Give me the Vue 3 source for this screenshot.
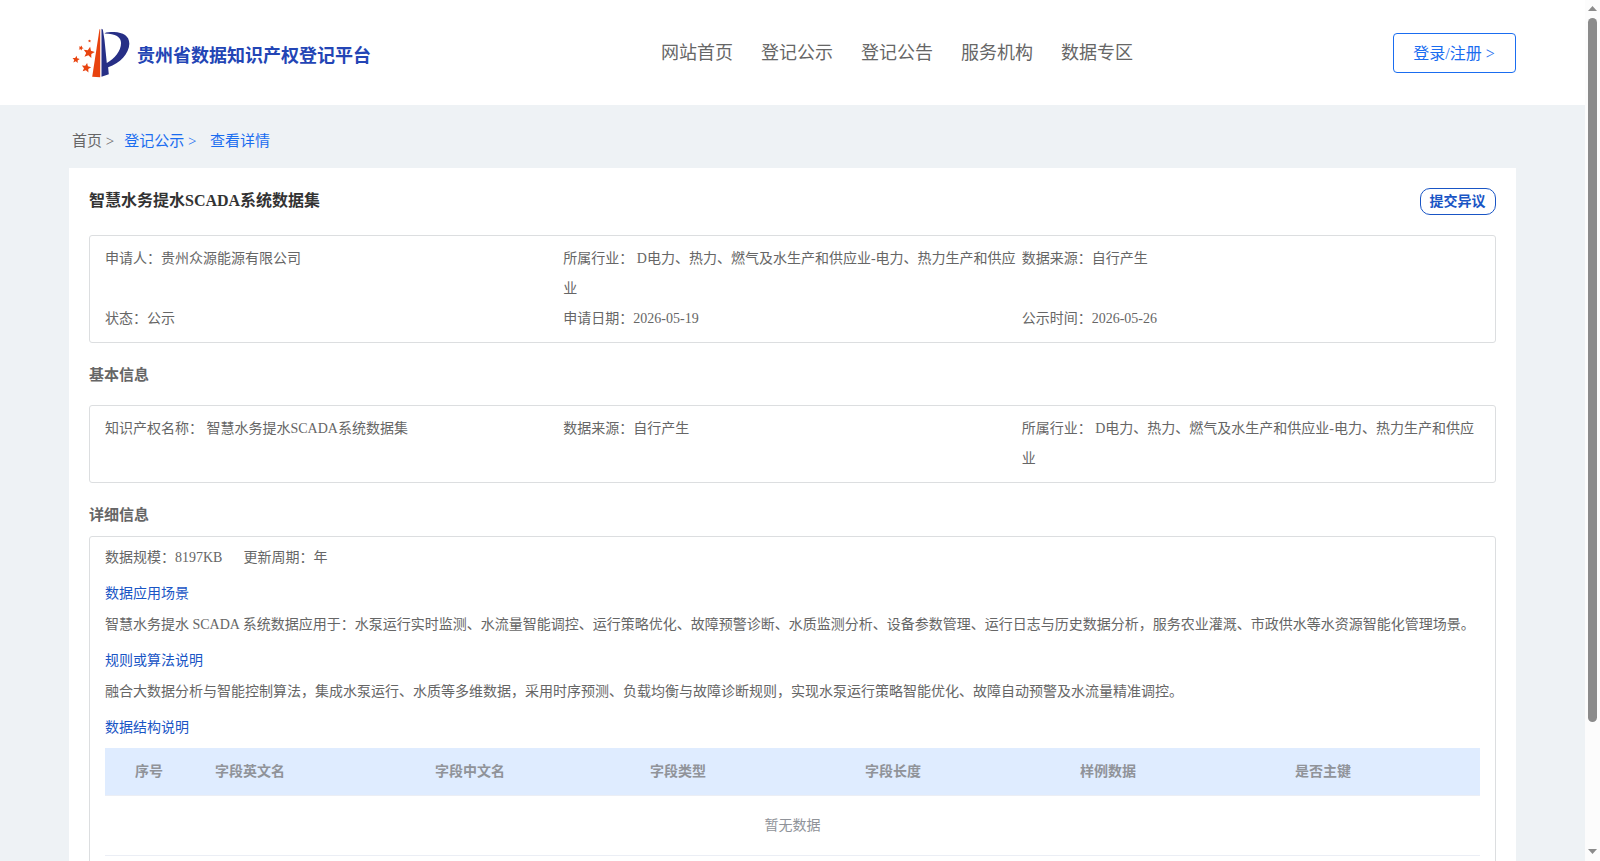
<template>
  <div class="layout">
    <div class="page">
      <header class="header">
        <div class="brand">
          <svg class="brand-logo" viewBox="36 39 175 150">
            <path class="orange" d="M119 42 L121 42 L121 187 L97 186 Z" />
            <path
              class="navy"
              d="M125 41 L129 43 L134 74 L141 144 C164 132 184 108 184 84 C184 66 168 55 134 55 C139 51 150 51 163 51 C190 52 209 63 209 86 C208 116 181 145 145 157 L147 178 L125 186 Z"
            />
            <polygon v-for="(star, i) in stars" :key="i" class="orange" :points="starPoints(star)" />
          </svg>
          <span class="brand-name">贵州省数据知识产权登记平台</span>
        </div>
        <nav class="nav">
          <a v-for="item in navList" :key="item" class="nav-item">{{ item }}</a>
        </nav>
        <button class="login-btn">登录/注册 &gt;</button>
      </header>

      <div class="breadcrumb">
        <span class="crumb-home">首页 &gt;</span>
        <span class="crumb-link">登记公示 &gt;</span>
        <span class="crumb-link">查看详情</span>
      </div>

      <main class="card">
        <div class="card-head">
          <h1 class="card-title">智慧水务提水SCADA系统数据集</h1>
          <button class="objection-btn">提交异议</button>
        </div>

        <div class="info-box">
          <div v-for="item in summary" :key="item" class="info-item">{{ item }}</div>
        </div>

        <h2 class="section-title basic-title">基本信息</h2>
        <div class="info-box">
          <div v-for="item in basicInfo" :key="item" class="info-item">{{ item }}</div>
        </div>

        <h2 class="section-title detail-title">详细信息</h2>
        <div class="detail-box">
          <div class="meta">
            <span>数据规模：8197KB</span>
            <span>更新周期：年</span>
          </div>
          <template v-for="item in details" :key="item.title">
            <h3 class="detail-name">{{ item.title }}</h3>
            <p class="detail-text">{{ item.text }}</p>
          </template>
          <h3 class="detail-name">数据结构说明</h3>
          <div class="table">
            <div class="table-head">
              <span v-for="col in columns" :key="col">{{ col }}</span>
            </div>
            <div class="table-empty">暂无数据</div>
          </div>
        </div>
      </main>
    </div>

    <div class="scrollbar">
      <svg class="arrow" viewBox="0 0 9 5"><path d="M0 5 L4.5 0 L9 5 Z" /></svg>
      <div class="thumb"></div>
      <svg class="arrow arrow-down" viewBox="0 0 9 5"><path d="M0 0 L4.5 5 L9 0 Z" /></svg>
    </div>
  </div>
</template>

<script setup>
const navList = ['网站首页', '登记公示', '登记公告', '服务机构', '数据专区']

const summary = [
  '申请人：贵州众源能源有限公司',
  '所属行业： D电力、热力、燃气及水生产和供应业-电力、热力生产和供应业',
  '数据来源：自行产生',
  '状态：公示',
  '申请日期：2026-05-19',
  '公示时间：2026-05-26'
]

const basicInfo = [
  '知识产权名称： 智慧水务提水SCADA系统数据集',
  '数据来源：自行产生',
  '所属行业： D电力、热力、燃气及水生产和供应业-电力、热力生产和供应业'
]

const details = [
  {
    title: '数据应用场景',
    text: '智慧水务提水 SCADA 系统数据应用于：水泵运行实时监测、水流量智能调控、运行策略优化、故障预警诊断、水质监测分析、设备参数管理、运行日志与历史数据分析，服务农业灌溉、市政供水等水资源智能化管理场景。'
  },
  {
    title: '规则或算法说明',
    text: '融合大数据分析与智能控制算法，集成水泵运行、水质等多维数据，采用时序预测、负载均衡与故障诊断规则，实现水泵运行策略智能优化、故障自动预警及水流量精准调控。'
  }
]

const columns = ['序号', '字段英文名', '字段中文名', '字段类型', '字段长度', '样例数据', '是否主键']

// logo stars: centre, radius and rotation
const stars = [
  { x: 87, y: 113, r: 18, turn: 12 },
  { x: 48, y: 134, r: 11.5, turn: 8 },
  { x: 79, y: 159, r: 15, turn: 10 },
  { x: 63, y: 99, r: 8, turn: 20 },
  { x: 89, y: 78, r: 5, turn: 10 }
]

/**
 * Builds the points attribute of a five-pointed star
 */
const starPoints = ({ x, y, r, turn }) => {
  return Array.from({ length: 10 }, (_, i) => {
    const radius = i % 2 ? r * 0.46 : r
    const angle = ((i * 36 - 90 + turn) * Math.PI) / 180
    return `${(x + radius * Math.cos(angle)).toFixed(1)},${(y + radius * Math.sin(angle)).toFixed(1)}`
  }).join(' ')
}
</script>

<style>
body {
  overflow: hidden;
}
</style>

<style scoped>
.layout {
  display: flex;
  height: 861px;
  overflow: hidden;
  font-family: 'Liberation Serif', 'Noto Sans CJK SC', serif;
  font-size: 14px;
  color: #666;
}

.page {
  flex: 1;
  min-width: 0;
  background: #eef2f5;
}

.header {
  display: flex;
  align-items: flex-start;
  height: 105px;
  padding: 0 69px;
  box-sizing: border-box;
  background: #fff;
}

.brand {
  display: flex;
  align-items: center;
  width: 592px;
  padding: 28px 0 0 3px;
  box-sizing: border-box;
}

.brand-logo {
  width: 58px;
  height: 50px;
}

.orange {
  fill: #e8430f;
}

.navy {
  fill: #272f86;
}

.brand-name {
  margin-left: 7px;
  padding-top: 5px;
  font-size: 18px;
  line-height: 26px;
  font-weight: bold;
  color: #2345b5;
}

.nav {
  display: flex;
  gap: 28px;
  padding-top: 39px;
}

.nav-item {
  font-size: 18px;
  line-height: 28px;
}

.login-btn {
  width: 123px;
  height: 40px;
  margin: 33px 0 0 auto;
  padding: 0 1px 2px 0;
  border: 1px solid #1a6df0;
  border-radius: 4px;
  background: #fff;
  font-family: inherit;
  font-size: 16px;
  color: #1a6df0;
}

.breadcrumb {
  display: flex;
  height: 63px;
  padding: 6px 0 0 72px;
  box-sizing: border-box;
  font-size: 15px;
  line-height: 61px;
}

.crumb-home {
  margin-right: 10px;
}

.crumb-link {
  margin-right: 13.5px;
  color: #1a6df0;
}

.card {
  height: 1000px;
  margin: 0 69px;
  padding: 20px 20px 0;
  box-sizing: border-box;
  background: #fff;
}

.card-head {
  display: flex;
  justify-content: space-between;
  height: 47px;
}

.card-title {
  margin: 0;
  font-size: 16px;
  line-height: 25px;
  color: #333;
}

.objection-btn {
  width: 76px;
  height: 27px;
  padding: 0 1px 3px 0;
  border: 1px solid #1955c5;
  border-radius: 10px;
  background: #fff;
  font-family: inherit;
  font-size: 14px;
  font-weight: bold;
  color: #1955c5;
}

.info-box {
  display: grid;
  grid-template-columns: repeat(3, 1fr);
  padding: 8px 15px;
  border: 1px solid #dcdee0;
  border-radius: 3px;
  line-height: 30px;
}

.section-title {
  margin: 0;
  font-size: 15px;
}

.basic-title {
  height: 62px;
  line-height: 64px;
}

.detail-title {
  height: 53px;
  line-height: 64px;
}

.detail-box {
  height: 500px;
  padding: 0 15px;
  border: 1px solid #dcdee0;
  border-radius: 3px;
}

.meta {
  display: flex;
  gap: 21px;
  padding-top: 1px;
  line-height: 40px;
}

.detail-name {
  margin: 0;
  font-size: 14px;
  font-weight: normal;
  line-height: 32px;
  color: #1955c5;
}

.detail-text {
  margin: 0 0 6px;
  line-height: 29px;
  white-space: nowrap;
}

.table {
  margin-top: 4px;
  color: #909399;
}

.table-head {
  display: grid;
  grid-template-columns: 110px 220px repeat(4, 215px) 1fr;
  line-height: 47px;
  font-weight: bold;
  background: #dfecff;
  border-bottom: 1px solid #ebeef5;
}

.table-head span:first-child {
  padding-left: 30px;
}

.table-empty {
  line-height: 59px;
  text-align: center;
  border-bottom: 1px solid #ebeef5;
}

.scrollbar {
  display: flex;
  flex-direction: column;
  align-items: center;
  width: 15px;
  padding: 6px 0 7px;
  box-sizing: border-box;
  background: #fcfcfc;
}

.arrow {
  width: 9px;
  height: 5px;
  fill: #8b8b8b;
}

.arrow-down {
  margin-top: auto;
}

.thumb {
  width: 9px;
  height: 704px;
  margin-top: 7px;
  border-radius: 5px;
  background: #8b8b8b;
}
</style>
